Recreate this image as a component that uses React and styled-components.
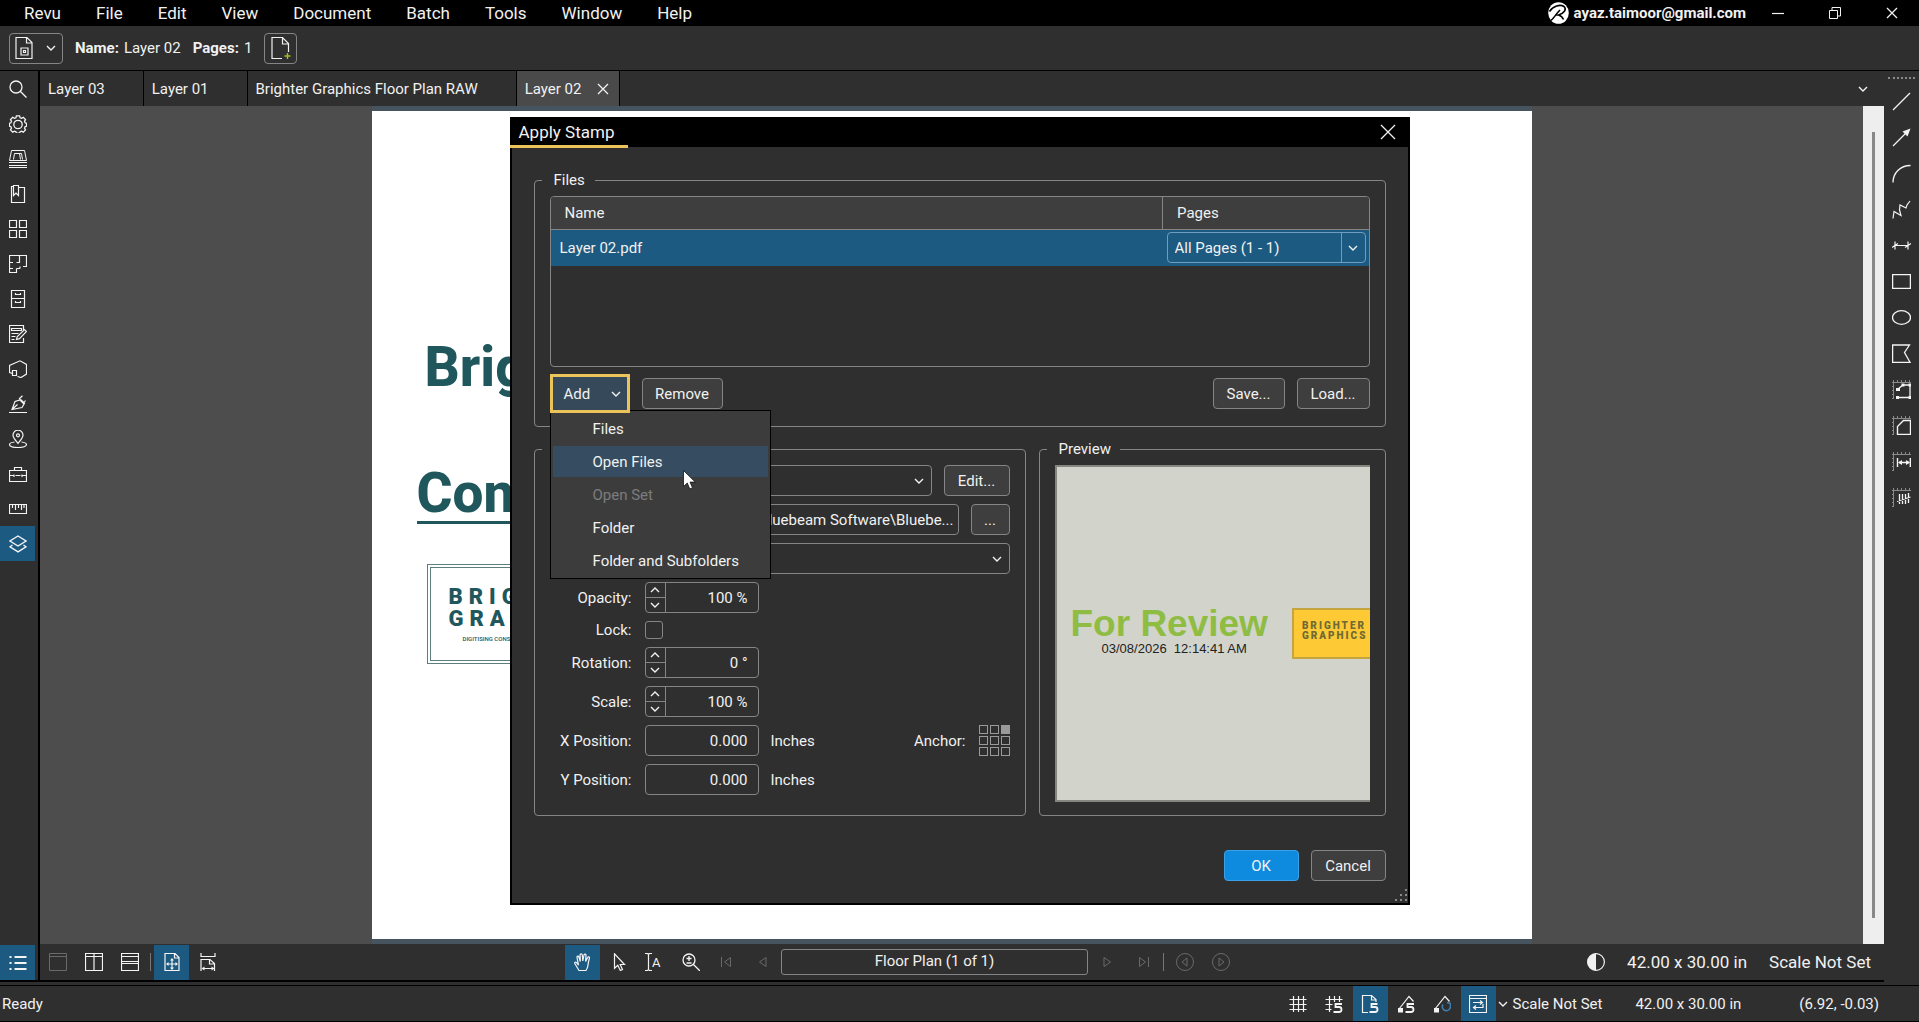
import React from "react";
import styled, { createGlobalStyle, css } from "styled-components";

const c = {
  bg: "#2f2f2f",
  raised: "#3e3e3e",
  canvas: "#4d4d4d",
  line: "#858585",
  blue: "#1d5a82",
  text: "#f1f1f1",
  dim: "#6a6a6a",
  teal: "#1f575c",
  gold: "#ecc35a",
};

const Global = createGlobalStyle`
  * { box-sizing: border-box; }
  body { margin: 0; background: ${c.bg}; }
  body, button, input, select {
    font-family: Roboto, "Liberation Sans", sans-serif;
    font-size: 15px;
    line-height: 18px;
    color: ${c.text};
  }
  button { padding: 0; cursor: default; }
  svg { display: block; flex: none; }
`;

/* ---------- icons ---------- */

const Svg = ({ size = 18, w, h, sw = 1, children }) => (
  <svg
    width={w || size}
    height={h || size}
    viewBox={`0 0 ${w || size} ${h || size}`}
    fill="none"
    stroke="currentColor"
    strokeWidth={sw}
    aria-hidden="true"
  >
    {children}
  </svg>
);

const Chevron = ({ up }) => (
  <Svg w={12} h={8} sw={2}>
    <path d={up ? "M2 6l4-4 4 4" : "M2 2l4 4 4-4"} strokeWidth="1.4" />
  </Svg>
);

const Close = ({ size = 12 }) => (
  <Svg size={size} sw={1.3}>
    <path d={`M1 1L${size - 1} ${size - 1}M${size - 1} 1L1 ${size - 1}`} />
  </Svg>
);

const leftIcons = {
  Search: <g strokeWidth="1.3"><circle cx="7" cy="7" r="6" /><path d="M11.2 11.2L17.5 17.5" /></g>,
  Properties: (
    <g strokeWidth="1.3">
      <path d="M7.4.8h3.2l.5 2 1.4.6 1.8-1 2.2 2.2-1 1.8.6 1.4 1.5.5v2.8l-1.5.6-.6 1.4 1 1.8-2.2 2.2-1.8-1-1.4.6-.5 1.5H7.4l-.5-1.5-1.4-.6-1.8 1-2.2-2.2 1-1.8-.6-1.4-1.5-.6V8.300l1.500-.5.600-1.400-1-1.800L3.700 2.400l1.800 1 1.400-.6z" />
      <circle cx="9" cy="9.500" r="4.200" />
    </g>
  ),
  Thumbnails: (
    <g>
      <path d="M.5 10.500L2.500.5h13l2 10z M4.500 9.500L5.500 3.500h7l1 6M10.500 3.500l1 6" />
      <path d="M0 12.500h18M0 15.500h18M0 17.500h18" />
    </g>
  ),
  Bookmarks: (
    <g strokeWidth="1.2">
      <path d="M5 1.500H2.500v16h13v-15H9.500" />
      <path d="M4.500.5h5v10L7 8l-2.500 2.500z" />
    </g>
  ),
  Sets: (
    <g strokeWidth="1.2">
      <path d="M.5.5h7v7h-7zM10.500.5h7v7h-7zM.5 10.500h7v7h-7zM10.500 10.500h7v7h-7z" />
    </g>
  ),
  Spaces: (
    <g strokeWidth="1.200">
      <path d="M4 7.500H.5V.5h17v11H14M.5 7v10.500h7v-4M10.500.5v7H7.500M4 13.500H.5M7.500 13.500H11M11 11.500v2" />
    </g>
  ),
  Files: (
    <g strokeWidth="1.200">
      <path d="M2.500.5h13v17h-13zM2.500 8.500h13M6.500 3v1.500h5V3M6.500 11v1.500h5V11" />
    </g>
  ),
  Markups: (
    <g strokeWidth="1.200">
      <path d="M14.500 5V.5H.5v17h14V13" />
      <path d="M2.500 3.500h10v2h-10zM2.500 8.500h7M2.500 11.500h4M2.500 14.500h3" />
      <path d="M7.500 14.500l.8-3L15.500 4.500l2 2-7 7.200z" />
    </g>
  ),
  Studio: (
    <g strokeWidth="1.200">
      <path d="M3.500 13.500L.5 12.500V5.500L11 .8l6.500 3.700v9.500L12 17.500 8.500 16.500M3.500 10.500h4v5h-4z" />
    </g>
  ),
  Signatures: (
    <g strokeWidth="1.200">
      <path d="M0 17.500h18M3 14.500L6 6.500l5-1.500 4 4-2 3.500zM3 14.500L8.500 9.500M10 4L13.500.8M11.500 4.500l4.500 4M16.500 5.500l-1.500 2" />
    </g>
  ),
  Places: (
    <g strokeWidth="1.200">
      <path d="M9 13.500C5.500 9 4 7.500 4 5.200a5 5 0 0110 0C14 7.500 12.500 9 9 13.500z" />
      <circle cx="9" cy="5.300" r="1.500" />
      <path d="M5.500 12C2.500 12.400.5 13.200.5 14.500c0 1.700 3.500 3 8.500 3s8.500-1.300 8.500-3c0-1.300-2-2.100-5-2.500" />
    </g>
  ),
  "Tool Chest": (
    <g strokeWidth="1.200">
      <path d="M.5 5.500h17v11H.5zM5.500 5V2.500h7V5M.5 10.500h4M6.500 10.500h5M13.500 10.500h4M5 9.500v2.500M13 9.500v2.500" />
    </g>
  ),
  Measurements: (
    <g strokeWidth="1.200">
      <path d="M.5 4.500h17v9H.5zM3.500 5v3M6.500 5v5M9.500 5v3M12.500 5v5M15 5v3" />
    </g>
  ),
  Layers: (
    <g strokeWidth="1.400">
      <path d="M9 1l8 5-8 5-8-5z" />
      <path d="M3.500 10L1 11.800l8 5 8-5-2.500-1.800" />
    </g>
  ),
};

const ticks = (
  <g stroke="#8a8a8a">
    <path d="M1.500 0v19M0 2.500h19M5.500 0v2M9.500 0v2M13.500 0v2M17.500 0v2M0 6.500h2M0 10.500h2M0 14.500h2M0 18.500h2" />
  </g>
);

const rightIcons = {
  Line: <path d="M1 18L18 1" strokeWidth="1.300" />,
  Arrow: <g><path d="M1 18L14 5" strokeWidth="1.300" /><path d="M18.500.5l-3 8-5-5z" fill="currentColor" stroke="none" /></g>,
  Arc: <path d="M1 18.500C1 9 8 1.500 18.500 1.500" strokeWidth="1.300" />,
  Polyline: <path d="M1 18.500L2 11.500l7 4L7.500 10 8 5l6 3 1-3 3-4" strokeWidth="1.200" />,
  Dimension: <g strokeWidth="1.200"><path d="M2 9.500h15M3 5.500v8M16 5.500v8M0 11.500l6-4M13 11.500l6-4" /></g>,
  Rectangle: <path d="M.6 2.600h17.800v13.800H.6z" strokeWidth="1.300" />,
  Ellipse: <ellipse cx="9.500" cy="9.500" rx="9" ry="6.800" strokeWidth="1.300" />,
  Polygon: <path d="M.6 1h16.900l-5 7.500L18 18.300H.6z" strokeWidth="1.300" />,
  Polylength: (
    <g>{ticks}<path d="M6 9l5-4h7v12.500H5.500" strokeWidth="1.300" />
      <path d="M4 8h4v3H4zM9.500 3.500h3v3h-3zM16.500 3.500h2.500v3h-2.500zM4 16h3v3H4zM16.500 16h2.500v3h-2.500z" fill="currentColor" stroke="none" /></g>
  ),
  Area: <g>{ticks}<path d="M5.500 18.400V10.500L11.500 4.500h7v13.900z" strokeWidth="1.400" /></g>,
  Length: (
    <g>{ticks}<path d="M5.500 6v9M18.300 6v9M7 10.500h10" strokeWidth="1.400" />
      <path d="M6 10.500l4-2.500v5zM18 10.500l-4-2.500v5z" fill="currentColor" stroke="none" /></g>
  ),
  Count: <g>{ticks}<path d="M7.500 6v10M10.500 6v10M13.500 6v10M16.500 5v10M5 13.500L18.500 9" strokeWidth="1.300" /></g>,
};

const bottomIcons = {
  list: <g strokeWidth="1.800"><path d="M5.500 3h12M5.500 9h12M5.500 15h12" /><path d="M.5 3h2M.5 9h2M.5 15h2" /></g>,
  single: <path d="M.5.5h17v17H.5zM.5 3.500h17" />,
  cols: <path d="M.5.5h17v17H.5zM.5 3.500h17M9 .5v17" strokeWidth="1.200" />,
  rows: <path d="M.5.5h17v17H.5zM.5 3.500h17M.5 8.500h17M.5 10.500h17" strokeWidth="1.200" />,
  fitPage: (
    <g strokeWidth="1.200"><path d="M2 .5h10l4 4v13H2zM11.500.5v4.500H16M9 6v10M4 11h10" />
      <path d="M9 5l2 2.500H7zM9 17l2-2.500H7zM3 11l2.500-2v4zM15 11l-2.500-2v4z" fill="currentColor" stroke="none" /></g>
  ),
  fitWidth: (
    <g strokeWidth="1.200"><path d="M2 0v3.500h14V0M2 18V6.500h9l4.500 4V18M10.500 6.500V11h5M4 15.500h10" />
      <path d="M2.500 15.500l3-2v4zM15.500 15.500l-3-2v4z" fill="currentColor" stroke="none" /></g>
  ),
  hand: (
    <path
      strokeWidth="1.200"
      d="M5 17.500C3.500 15 2 12.500.8 10.500c-.5-1 .8-1.800 1.800-.8L4.500 12 3 4.500C2.800 3 4.500 2.700 4.900 4L6.300 8.500 6.100 2C6.100.5 8.100.5 8.300 2l.5 6L10 2c.3-1.400 2.200-1 2 .4L11.600 8.500 13.600 4.500c.6-1.300 2.200-.6 1.800.7-.9 3-1.200 5-1.600 8-.2 1.800-.9 3-1.800 4.300z"
    />
  ),
  select: <path d="M4.500.8v14.500l3.300-3 2.500 5.200 2.200-1-2.300-5h4.300z" strokeWidth="1.200" />,
  zoom: <g strokeWidth="1.300"><circle cx="7" cy="7" r="6" /><path d="M11.200 11.200L18 18M4.500 5.500h5M7 3v5M4.500 10h5" /></g>,
  first: <path d="M3.500 4v10M12.500 4.500v9L6.500 9z" />,
  prev: <path d="M12 4.500v9L5.500 9z" />,
  next: <path d="M6 4.500v9L12.500 9z" />,
  last: <path d="M14.500 4v10M5.500 4.500v9L11.500 9z" />,
  back: <g><circle cx="9" cy="9" r="8.500" /><path d="M11 5v8L6 9z" /></g>,
  fwd: <g><circle cx="9" cy="9" r="8.500" /><path d="M7 5v8l5-4z" /></g>,
  contrast: <g><circle cx="9" cy="9" r="8.400" strokeWidth="1.200" /><path d="M9 .5a8.500 8.500 0 000 17z" fill="currentColor" stroke="none" /></g>,
  grid: <path d="M4.500 1v16M9.500 1v16M14.500 1v16M.5 4.500h17M.5 9.500h17M.5 14.500h17" strokeWidth="1.200" />,
  snapGrid: (
    <g strokeWidth="1.200"><path d="M4.500 1v16M9.500 1v6M14.500 1v6M.5 4.500h17M.5 9.500h7M.5 14.500h6" />
      <path d="M17 9h-6.500v3h3.500a2.300 2.300 0 010 5H8.500" strokeWidth="1.800" /></g>
  ),
  snapPage: (
    <g strokeWidth="1.200"><path d="M7 17.500H1.500V.5h9l4.500 4V7M10.500.5v4.500H15" />
      <path d="M16.500 9h-6v3h3.500a2.300 2.300 0 010 5H8.500" strokeWidth="1.800" /></g>
  ),
  snapMarkup: (
    <g strokeWidth="1.200"><path d="M2 14L12 1.500l4.500 5" /><path d="M1 13h5v4.500H1z" fill="currentColor" stroke="none" />
      <path d="M17 9h-6.500v3h3.500a2.300 2.300 0 010 5H8.500" strokeWidth="1.800" /></g>
  ),
  snapContent: (
    <g strokeWidth="1.200"><path d="M2 14L12 1.500l4.500 5" /><path d="M1 13h5v4.500H1z" fill="currentColor" stroke="none" />
      <path d="M10 9.500a4 4 0 107.300 1.500M14 7.500l3.500 1v3.500" stroke="#3d7db0" strokeWidth="1.600" /></g>
  ),
  sync: (
    <g strokeWidth="1.200"><path d="M.5.5h17v17H.5zM.5 3.500h17" />
      <path d="M4 7.500h9M11 5.500l2.500 2-2.500 2M14 9v3.500H5M7 10.500l-2.500 2L7 14.500" /></g>
  ),
};

const Icon = ({ name }) => <Svg>{bottomIcons[name]}</Svg>;

/* ---------- shell ---------- */

const Shell = styled.div`
  min-height: 100vh;
  display: flex;
  flex-direction: column;
  background: ${c.bg};
`;

const MenuBar = styled.header`
  height: 26px;
  display: flex;
  align-items: center;
  padding: 0 21px 0 24px;
  background: #000;
`;

const MainMenu = styled.nav`
  display: flex;
  gap: 35px;
  flex: 1;
`;

const Plain = styled.button`
  border: 0;
  background: none;
  color: inherit;
  font-size: ${(p) => p.$size || 15}px;
  display: flex;
  align-items: center;
  justify-content: center;
`;

const Account = styled.div`
  display: flex;
  align-items: center;
  gap: 5px;
  font-size: 15px;
  font-weight: 700;
  margin-right: 26px;
`;

const WindowButtons = styled.div`
  display: flex;
  gap: 45px;
`;

const DocBar = styled.div`
  height: 45px;
  display: flex;
  align-items: center;
  gap: 12px;
  padding: 0 9px;
  border-bottom: 1px solid #000;
`;

const DocText = styled.span`
  b { font-weight: 700; margin-right: 5px; }
`;

const OutlineButton = styled.button`
  height: 31px;
  min-width: ${(p) => p.$w || 54}px;
  display: flex;
  align-items: center;
  justify-content: center;
  gap: 12px;
  border: 1px solid ${c.line};
  border-radius: 4px;
  background: ${(p) => (p.$primary ? "#0e8ade" : p.$flat ? "transparent" : c.raised)};
  ${(p) => p.$primary && css`border-color: #3ba0e6;`}
`;

const Body = styled.div`
  flex: 1;
  display: flex;
  min-height: 0;
`;

const Workspace = styled.div`
  flex: 1;
  min-width: 0;
  display: flex;
  border-bottom: 2px solid #000;
  margin-bottom: 3px;
`;

const LeftRail = styled.nav`
  width: 40px;
  border-right: 2px solid #000;
  display: flex;
  flex-direction: column;
  align-items: flex-start;
`;

const RailButton = styled.button`
  width: 35px;
  height: ${(p) => p.$h || 35}px;
  display: flex;
  align-items: center;
  justify-content: center;
  border: 0;
  color: ${(p) => (p.$dim ? c.dim : "#f4f4f4")};
  background: ${(p) => (p.$on ? c.blue : "transparent")};
`;

const Spacer = styled.div`
  flex: 1;
`;

const Center = styled.main`
  flex: 1;
  min-width: 0;
  display: flex;
  flex-direction: column;
`;

const Tabs = styled.div`
  height: 35px;
  display: flex;
  padding-right: 15px;
`;

const Tab = styled.div`
  display: flex;
  align-items: center;
  gap: 16px;
  padding: 0 10px 0 8px;
  border-right: 1px solid #000;
  background: ${(p) => (p.$on ? "#4a4a4a" : "transparent")};
`;

const TabClose = styled(Plain)`
  width: 12px;
  height: 12px;
`;

const Stage = styled.div`
  flex: 1;
  min-height: 0;
  display: flex;
  background: ${c.canvas};
`;

const Sheet = styled.article`
  width: 1160px;
  margin: 0 auto;
  padding: 224px 0 0;
  background: #fff;
  border: solid #45545f;
  border-width: 5px 0;
  color: ${c.teal};
  overflow: hidden;
`;

const SheetTitle = styled.h1`
  margin: 0 0 66px 53px;
  font-size: 55px;
  line-height: 65px;
  font-weight: 800;
`;

const SheetSub = styled.h2`
  width: 120px;
  margin: 0 0 40px 45px;
  font-size: 55px;
  line-height: 55px;
  font-weight: 800;
  border-bottom: 3px solid ${c.teal};
`;

const SheetLogo = styled.div`
  width: 210px;
  height: 100px;
  margin-left: 55px;
  border: 4px double #5b7f7f;
  display: flex;
  flex-direction: column;
  justify-content: center;
  padding-left: 18px;
`;

const LogoWord = styled.span`
  font-size: ${(p) => p.$size}px;
  line-height: ${(p) => p.$size}px;
  font-weight: 900;
  letter-spacing: ${(p) => p.$track}px;
`;

const LogoTag = styled.span`
  font-size: ${(p) => p.$size}px;
  line-height: ${(p) => p.$size}px;
  font-weight: 500;
  margin: ${(p) => p.$margin};
`;

const ScrollTrack = styled.div`
  width: 21px;
  background: #eee;
  padding: 26px 9px;
  display: flex;
`;

const ScrollThumb = styled.div`
  flex: 1;
  background: #888;
`;

const NavBar = styled.div`
  height: 36px;
  display: flex;
  align-items: center;
  padding-right: 13px;
  font-size: 17px;
`;

const NavGroup = styled.div`
  display: flex;
  align-items: center;
  margin-left: ${(p) => p.$ml || 0}px;
  gap: ${(p) => p.$gap || 1}px;
`;

const Divider = styled.span`
  width: 1px;
  height: 18px;
  background: #777;
  margin: 0 2px;
`;

const PageBox = styled.input`
  width: 307px;
  height: 26px;
  padding: 0 0 2px;
  text-align: center;
  background: ${c.bg};
  border: 1px solid ${c.line};
  border-radius: 3px;
`;

const RightRail = styled.nav`
  width: 35px;
  display: flex;
  flex-direction: column;
  align-items: center;
  padding-top: 5px;
`;

const Grip = styled.span`
  width: 27px;
  height: 4px;
  border-top: 2px dotted #8a8a8a;
  margin: 1px 0 2px;
`;

const StatusBar = styled.footer`
  height: 37px;
  display: flex;
  align-items: center;
  border: solid #000;
  border-width: 1px 0;
  padding: 0 40px 0 2px;
`;

const StatusText = styled.span`
  margin-left: ${(p) => p.$ml || 0}px;
`;

/* ---------- dialog ---------- */

const Overlay = styled.div`
  position: absolute;
  inset: 0;
  display: grid;
  place-items: center;
`;

const Dialog = styled.section`
  width: 900px;
  background: ${c.bg};
  border: 2px solid #000;
  border-top: 0;
`;

const TitleBar = styled.div`
  height: 30px;
  display: flex;
  justify-content: space-between;
  background: #000;
  padding-right: 12px;
`;

const Title = styled.h2`
  margin: 0 0 -1px -2px;
  padding: 2px 14px 0 9px;
  font-size: 17px;
  line-height: 26px;
  font-weight: 400;
  border-bottom: 3px solid ${c.gold};
`;

const DialogBody = styled.div`
  padding: 24px 22px 22px;
  display: flex;
  flex-direction: column;
  gap: 13px;
`;

const Group = styled.fieldset`
  margin: 0;
  min-width: 0;
  padding: 7px 15px ${(p) => p.$pb}px;
  border: 1px solid ${c.line};
  border-radius: 4px;
`;

const Legend = styled.legend`
  min-width: 53px;
  height: 18px;
  margin-left: -8px;
  padding: 0 9px 0 12px;
`;

const Columns = styled.div`
  display: grid;
  grid-template-columns: minmax(0, 1fr) 347px;
  gap: 13px;
`;

const TableBox = styled.div`
  height: 171px;
  border: 1px solid ${c.line};
  border-radius: 4px;
  overflow: hidden;
`;

const Table = styled.table`
  width: 100%;
  border-collapse: collapse;
  th {
    height: 32px;
    padding: 0 14px;
    font-weight: 400;
    text-align: left;
    background: ${c.raised};
    border-bottom: 1px solid ${c.line};
  }
  th + th { width: 206px; border-left: 1px solid ${c.line}; }
  td { height: 37px; padding: 0 9px; background: ${c.blue}; }
  td + td { padding: 0 3px 0 4px; }
`;

const SelectWrap = styled.span`
  position: relative;
  display: flex;
  flex: 1;
  height: 31px;
  min-width: 0;
`;

const Select = styled.select`
  appearance: none;
  width: 100%;
  padding: 0 7px;
  background: transparent;
  border: 1px solid ${(p) => (p.$blue ? "#6f9dbd" : c.line)};
  border-radius: 4px;
`;

const SelectArrow = styled.span`
  position: absolute;
  inset: 1px 1px 1px auto;
  width: 24px;
  display: grid;
  place-items: center;
  pointer-events: none;
  border-left: 1px solid ${(p) => (p.$blue ? "#6f9dbd" : "transparent")};
`;

const Row = styled.div`
  display: flex;
  align-items: center;
  gap: 12px;
`;

const FileActions = styled(Row)`
  height: 39px;
  margin-top: 7px;
`;

const AddWrap = styled.div`
  position: relative;
`;

const AddButton = styled.button`
  position: relative;
  z-index: 2;
  width: 80px;
  height: 39px;
  display: flex;
  align-items: center;
  justify-content: space-between;
  padding: 0 5px 0 11px;
  background: #36495a;
  border: 3px solid ${c.gold};
`;

const Popup = styled.div`
  position: absolute;
  z-index: 1;
  top: 36px;
  left: 0;
  width: 221px;
  padding: 2px;
  display: flex;
  flex-direction: column;
  gap: 2px;
  background: #3c3c3c;
  border: 1px solid #000;
`;

const PopupItem = styled.button`
  height: 31px;
  padding: 0 0 0 40px;
  text-align: left;
  border: 0;
  background: ${(p) => (p.$on ? "#364d61" : "transparent")};
  color: ${(p) => (p.disabled ? "#7c7c7c" : c.text)};
`;

const Pointer = styled.span`
  position: absolute;
  top: 59px;
  left: 132px;
`;

const Form = styled.div`
  display: flex;
  flex-direction: column;
  gap: 8px;
`;

const FormRow = styled.div`
  display: grid;
  grid-template-columns: 82px minmax(0, 1fr);
  gap: 13px;
  align-items: center;
`;

const Label = styled.label`
  text-align: right;
  white-space: nowrap;
`;

const TextBox = styled.input`
  height: 31px;
  min-width: 0;
  width: ${(p) => p.$w || "auto"};
  flex: ${(p) => (p.$grow ? 1 : "none")};
  padding: 0 ${(p) => p.$pr || 10}px;
  text-align: right;
  background: transparent;
  border: 1px solid ${c.line};
  border-radius: 4px;
`;

const Spin = styled.div`
  display: flex;
  width: 114px;
  height: 31px;
  border: 1px solid ${c.line};
  border-radius: 4px;
  input {
    flex: 1;
    min-width: 0;
    padding: 0 10px;
    text-align: right;
    background: transparent;
    border: 0;
    border-left: 1px solid ${c.line};
  }
`;

const Steps = styled.div`
  width: 19px;
  display: flex;
  flex-direction: column;
  button {
    flex: 1;
    display: grid;
    place-items: center;
    background: none;
    border: 0;
  }
  button + button { border-top: 1px solid ${c.line}; }
`;

const Check = styled.input`
  appearance: none;
  width: 18px;
  height: 18px;
  margin: 0;
  border: 1px solid ${c.line};
  border-radius: 3px;
`;

const AnchorField = styled.div`
  display: flex;
  align-items: center;
  gap: 13px;
  margin-left: auto;
`;

const AnchorGrid = styled.div`
  display: grid;
  grid-template-columns: repeat(3, 9px);
  gap: 2px;
`;

const AnchorDot = styled.input`
  appearance: none;
  width: 9px;
  height: 9px;
  margin: 0;
  border: 1px solid #9a9a9a;
  &:checked { background: #9a9a9a; }
`;

const Preview = styled.div`
  height: 337px;
  display: flex;
  align-items: center;
  gap: 24px;
  overflow: hidden;
  padding-left: 14px;
  background: #d2d4cb;
  border: solid #85867f;
  border-width: 2px 0 2px 2px;
`;

const Stamp = styled.div`
  flex: none;
  display: flex;
  flex-direction: column;
  align-items: center;
  color: #222;
  font: 13px/16px "Liberation Sans", sans-serif;
  white-space: pre;
  strong { font-size: 37px; line-height: 34px; color: #8fbd44; }
  time { padding: 0 0 4px 10px; }
`;

const StampLogo = styled.div`
  flex: 1;
  height: 51px;
  padding: 11px 0 0 8px;
  display: flex;
  flex-direction: column;
  background: #fdc935;
  border: 2px solid #c5a540;
  border-right: 0;
  color: #6f6a33;
`;

const Footer = styled.div`
  display: flex;
  justify-content: flex-end;
  gap: 12px;
  margin-top: 21px;
`;

const Resize = styled.span`
  position: absolute;
  right: 2px;
  bottom: 2px;
  color: #8a8a8a;
`;

const Framed = styled.div`
  position: relative;
`;

/* ---------- parts ---------- */

const ComboBox = ({ label, value, blue }) => (
  <SelectWrap>
    <Select aria-label={label} $blue={blue} defaultValue={value}>
      <option>{value}</option>
    </Select>
    <SelectArrow $blue={blue}><Chevron /></SelectArrow>
  </SelectWrap>
);

const SpinRow = ({ id, label, value }) => (
  <FormRow>
    <Label htmlFor={id}>{label}</Label>
    <Spin>
      <Steps>
        <button aria-label={`Increase ${label}`}><Chevron up /></button>
        <button aria-label={`Decrease ${label}`}><Chevron /></button>
      </Steps>
      <input id={id} defaultValue={value} />
    </Spin>
  </FormRow>
);

const NavButton = ({ icon, label, ...rest }) => (
  <RailButton aria-label={label || icon} {...rest}><Icon name={icon} /></RailButton>
);

function ApplyStamp() {
  return (
    <Overlay>
      <Framed>
        <Dialog role="dialog" aria-labelledby="dlg-title">
          <TitleBar>
            <Title id="dlg-title">Apply Stamp</Title>
            <Plain aria-label="Close dialog"><Close size={16} /></Plain>
          </TitleBar>
          <DialogBody>
            <Group $pb={13}>
              <Legend>Files</Legend>
              <TableBox>
                <Table>
                  <thead><tr><th>Name</th><th>Pages</th></tr></thead>
                  <tbody>
                    <tr>
                      <td>Layer 02.pdf</td>
                      <td><ComboBox label="Pages" value="All Pages (1 - 1)" blue /></td>
                    </tr>
                  </tbody>
                </Table>
              </TableBox>
              <FileActions>
                <AddWrap>
                  <AddButton aria-haspopup="menu">Add <Chevron /></AddButton>
                  <Popup role="menu">
                    <PopupItem role="menuitem">Files</PopupItem>
                    <PopupItem role="menuitem" $on>Open Files</PopupItem>
                    <PopupItem role="menuitem" disabled>Open Set</PopupItem>
                    <PopupItem role="menuitem">Folder</PopupItem>
                    <PopupItem role="menuitem">Folder and Subfolders</PopupItem>
                    <Pointer>
                      <svg width="13" height="20" viewBox="0 0 13 20" aria-hidden="true">
                        <path d="M.5.5v16l3.800-3.500 2.500 6 2.700-1.200-2.500-5.700h5.300z" fill="#fff" stroke="#111" strokeWidth=".8" />
                      </svg>
                    </Pointer>
                  </Popup>
                </AddWrap>
                <OutlineButton $w={81}>Remove</OutlineButton>
                <Spacer />
                <OutlineButton $w={72}>Save...</OutlineButton>
                <OutlineButton $w={73}>Load...</OutlineButton>
              </FileActions>
            </Group>
            <Columns>
              <Group $pb={20} aria-label="Stamp">
                <Legend />
                <Form>
                  <FormRow>
                    <span />
                    <Row>
                      <ComboBox label="Stamp" value="" />
                      <OutlineButton $w={66}>Edit...</OutlineButton>
                    </Row>
                  </FormRow>
                  <FormRow>
                    <span />
                    <Row>
                      <TextBox aria-label="Path" $grow $pr={4} readOnly value={"Bluebeam Software\\Bluebe..."} />
                      <OutlineButton $w={39}>...</OutlineButton>
                    </Row>
                  </FormRow>
                  <FormRow>
                    <span />
                    <ComboBox label="Blend mode" value="" />
                  </FormRow>
                  <SpinRow id="opacity" label="Opacity:" value="100 %" />
                  <FormRow>
                    <Label htmlFor="lock">Lock:</Label>
                    <Check id="lock" type="checkbox" />
                  </FormRow>
                  <SpinRow id="rotation" label="Rotation:" value="0 °" />
                  <SpinRow id="scale" label="Scale:" value="100 %" />
                  <FormRow>
                    <Label htmlFor="xpos">X Position:</Label>
                    <Row>
                      <TextBox id="xpos" $w="114px" defaultValue="0.000" />
                      <span>Inches</span>
                      <AnchorField>
                        <span id="anchor">Anchor:</span>
                        <AnchorGrid role="radiogroup" aria-labelledby="anchor">
                          {Array.from({ length: 9 }, (_, i) => (
                            <AnchorDot key={i} type="radio" name="anchor" aria-label={`Anchor ${i + 1}`} defaultChecked={i === 2} />
                          ))}
                        </AnchorGrid>
                      </AnchorField>
                    </Row>
                  </FormRow>
                  <FormRow>
                    <Label htmlFor="ypos">Y Position:</Label>
                    <Row>
                      <TextBox id="ypos" $w="114px" defaultValue="0.000" />
                      <span>Inches</span>
                    </Row>
                  </FormRow>
                </Form>
              </Group>
              <Group $pb={12}>
                <Legend>Preview</Legend>
                <Preview>
                  <Stamp>
                    <strong>For Review</strong>
                    <time>{"03/08/2026  12:14:41 AM"}</time>
                  </Stamp>
                  <StampLogo>
                    <LogoWord $size={10} $track={2}>BRIGHTER</LogoWord>
                    <LogoWord $size={10} $track={2}>GRAPHICS</LogoWord>
                  </StampLogo>
                </Preview>
              </Group>
            </Columns>
            <Footer>
              <OutlineButton $w={75} $primary>OK</OutlineButton>
              <OutlineButton $w={75}>Cancel</OutlineButton>
            </Footer>
          </DialogBody>
        </Dialog>
        <Resize>
          <svg width="14" height="14" viewBox="0 0 14 14" fill="currentColor" aria-hidden="true">
            <path d="M11 0h2v2h-2zM6 5h2v2H6zM11 5h2v2h-2zM1 10h2v2H1zM6 10h2v2H6zM11 10h2v2h-2z" />
          </svg>
        </Resize>
      </Framed>
    </Overlay>
  );
}

const menus = ["Revu", "File", "Edit", "View", "Document", "Batch", "Tools", "Window", "Help"];
const tabs = ["Layer 03", "Layer 01", "Brighter Graphics Floor Plan RAW", "Layer 02"];

export default function App() {
  return (
    <Shell>
      <Global />
      <MenuBar>
        <MainMenu>
          {menus.map((m) => <Plain key={m} $size={17}>{m}</Plain>)}
        </MainMenu>
        <Account>
          <svg width="21" height="22" viewBox="0 0 21 22" aria-hidden="true">
            <ellipse cx="10.500" cy="11" rx="10.300" ry="10.800" fill="#fff" />
            <path d="M1.500 9.500C5 4 12 2 16 4.500c3 3 0 7-5.500 8.500 2 .5 4 2 5 4.500M3 18.500C6 16 8 12 12 8" fill="none" stroke="#000" strokeWidth="1.600" />
          </svg>
          ayaz.taimoor@gmail.com
        </Account>
        <WindowButtons>
          <Plain aria-label="Minimize"><Svg size={12}><path d="M0 6.500h12" strokeWidth="1.200" /></Svg></Plain>
          <Plain aria-label="Restore"><Svg size={12}><path d="M.5 3.500h8v8h-8zM3 3V.5h8.500V9H9" /></Svg></Plain>
          <Plain aria-label="Close window"><Close /></Plain>
        </WindowButtons>
      </MenuBar>
      <DocBar>
        <OutlineButton $flat aria-label="Document">
          <Svg w={18} h={24} sw={1.2}><path d="M1 1.500h11l5 5V22.500H1zM11.500 1.500V7H17M6 12h7v7H6zM8.500 14.500h2v2h-2z" /></Svg>
          <Chevron />
        </OutlineButton>
        <DocText><b>Name:</b>Layer 02</DocText>
        <DocText><b>Pages:</b>1</DocText>
        <OutlineButton $flat $w={33} aria-label="New page">
          <Svg w={20} h={24} sw={1.200}><path d="M11 22.500H1V1.500h10.500l6 6V16M11.500 1.500V8h6" /><path d="M16.500 17v6M13.500 20h6" stroke="#a8b92f" strokeWidth="1.400" /></Svg>
        </OutlineButton>
      </DocBar>
      <Body>
        <Workspace>
          <LeftRail>
            {Object.entries(leftIcons).map(([k, v]) => (
              <RailButton key={k} aria-label={k} $on={k === "Layers"}><Svg>{v}</Svg></RailButton>
            ))}
            <Spacer />
            <NavButton icon="list" label="Panels" $on />
          </LeftRail>
          <Center>
            <Tabs>
              {tabs.map((t, i) => (
                <Tab key={t} $on={i === 3}>
                  {t}
                  <TabClose aria-label={`Close ${t}`}>{i === 3 && <Close />}</TabClose>
                </Tab>
              ))}
              <Spacer />
              <Plain aria-label="All tabs"><Chevron /></Plain>
            </Tabs>
            <Stage>
              <Sheet>
                <SheetTitle>Brig</SheetTitle>
                <SheetSub>Con</SheetSub>
                <SheetLogo>
                  <LogoWord $size={22} $track={6}>BRIG</LogoWord>
                  <LogoWord $size={22} $track={6}>GRA</LogoWord>
                  <LogoTag $size={6} $margin="6px 0 0 14px">DIGITISING CONS</LogoTag>
                </SheetLogo>
              </Sheet>
              <ScrollTrack><ScrollThumb /></ScrollTrack>
            </Stage>
            <NavBar>
              <NavGroup>
                <NavButton icon="single" $dim />
                <NavButton icon="cols" />
                <NavButton icon="rows" />
                <Divider />
                <NavButton icon="fitPage" $on />
                <NavButton icon="fitWidth" />
              </NavGroup>
              <NavGroup $ml={340}>
                <NavButton icon="hand" $on />
                <NavButton icon="select" />
                <Plain aria-label="Select text">
                  <Svg w={35} h={18} sw={1.200}>
                    <path d="M8 .5h2.500l1 1 1-1H15M11.500 1v16M8 17.500h2.500l1-1 1 1H15" />
                    <text x="15" y="14" fontSize="13" fill="currentColor" stroke="none">A</text>
                  </Svg>
                </Plain>
                <NavButton icon="zoom" />
                <NavButton icon="first" $dim />
                <NavButton icon="prev" $dim />
                <PageBox aria-label="Page" defaultValue="Floor Plan (1 of 1)" />
                <NavButton icon="next" $dim />
                <NavButton icon="last" $dim />
                <Divider />
                <NavButton icon="back" $dim />
                <NavButton icon="fwd" $dim />
              </NavGroup>
              <Spacer />
              <NavGroup $gap={22}>
                <Icon name="contrast" />
                <span>42.00 x 30.00 in</span>
                <span>Scale Not Set</span>
              </NavGroup>
            </NavBar>
          </Center>
        </Workspace>
        <RightRail>
          <Grip />
          {Object.entries(rightIcons).map(([k, v]) => (
            <RailButton key={k} aria-label={k} $h={36}><Svg size={19}>{v}</Svg></RailButton>
          ))}
        </RightRail>
      </Body>
      <StatusBar>
        <span>Ready</span>
        <Spacer />
        <NavGroup>
          <NavButton icon="grid" />
          <NavButton icon="snapGrid" />
          <NavButton icon="snapPage" $on />
          <NavButton icon="snapMarkup" />
          <NavButton icon="snapContent" />
          <NavButton icon="sync" $on />
          <Chevron />
        </NavGroup>
        <StatusText $ml={4}>Scale Not Set</StatusText>
        <StatusText $ml={33}>42.00 x 30.00 in</StatusText>
        <StatusText $ml={58}>(6.92, -0.03)</StatusText>
      </StatusBar>
      <ApplyStamp />
    </Shell>
  );
}
